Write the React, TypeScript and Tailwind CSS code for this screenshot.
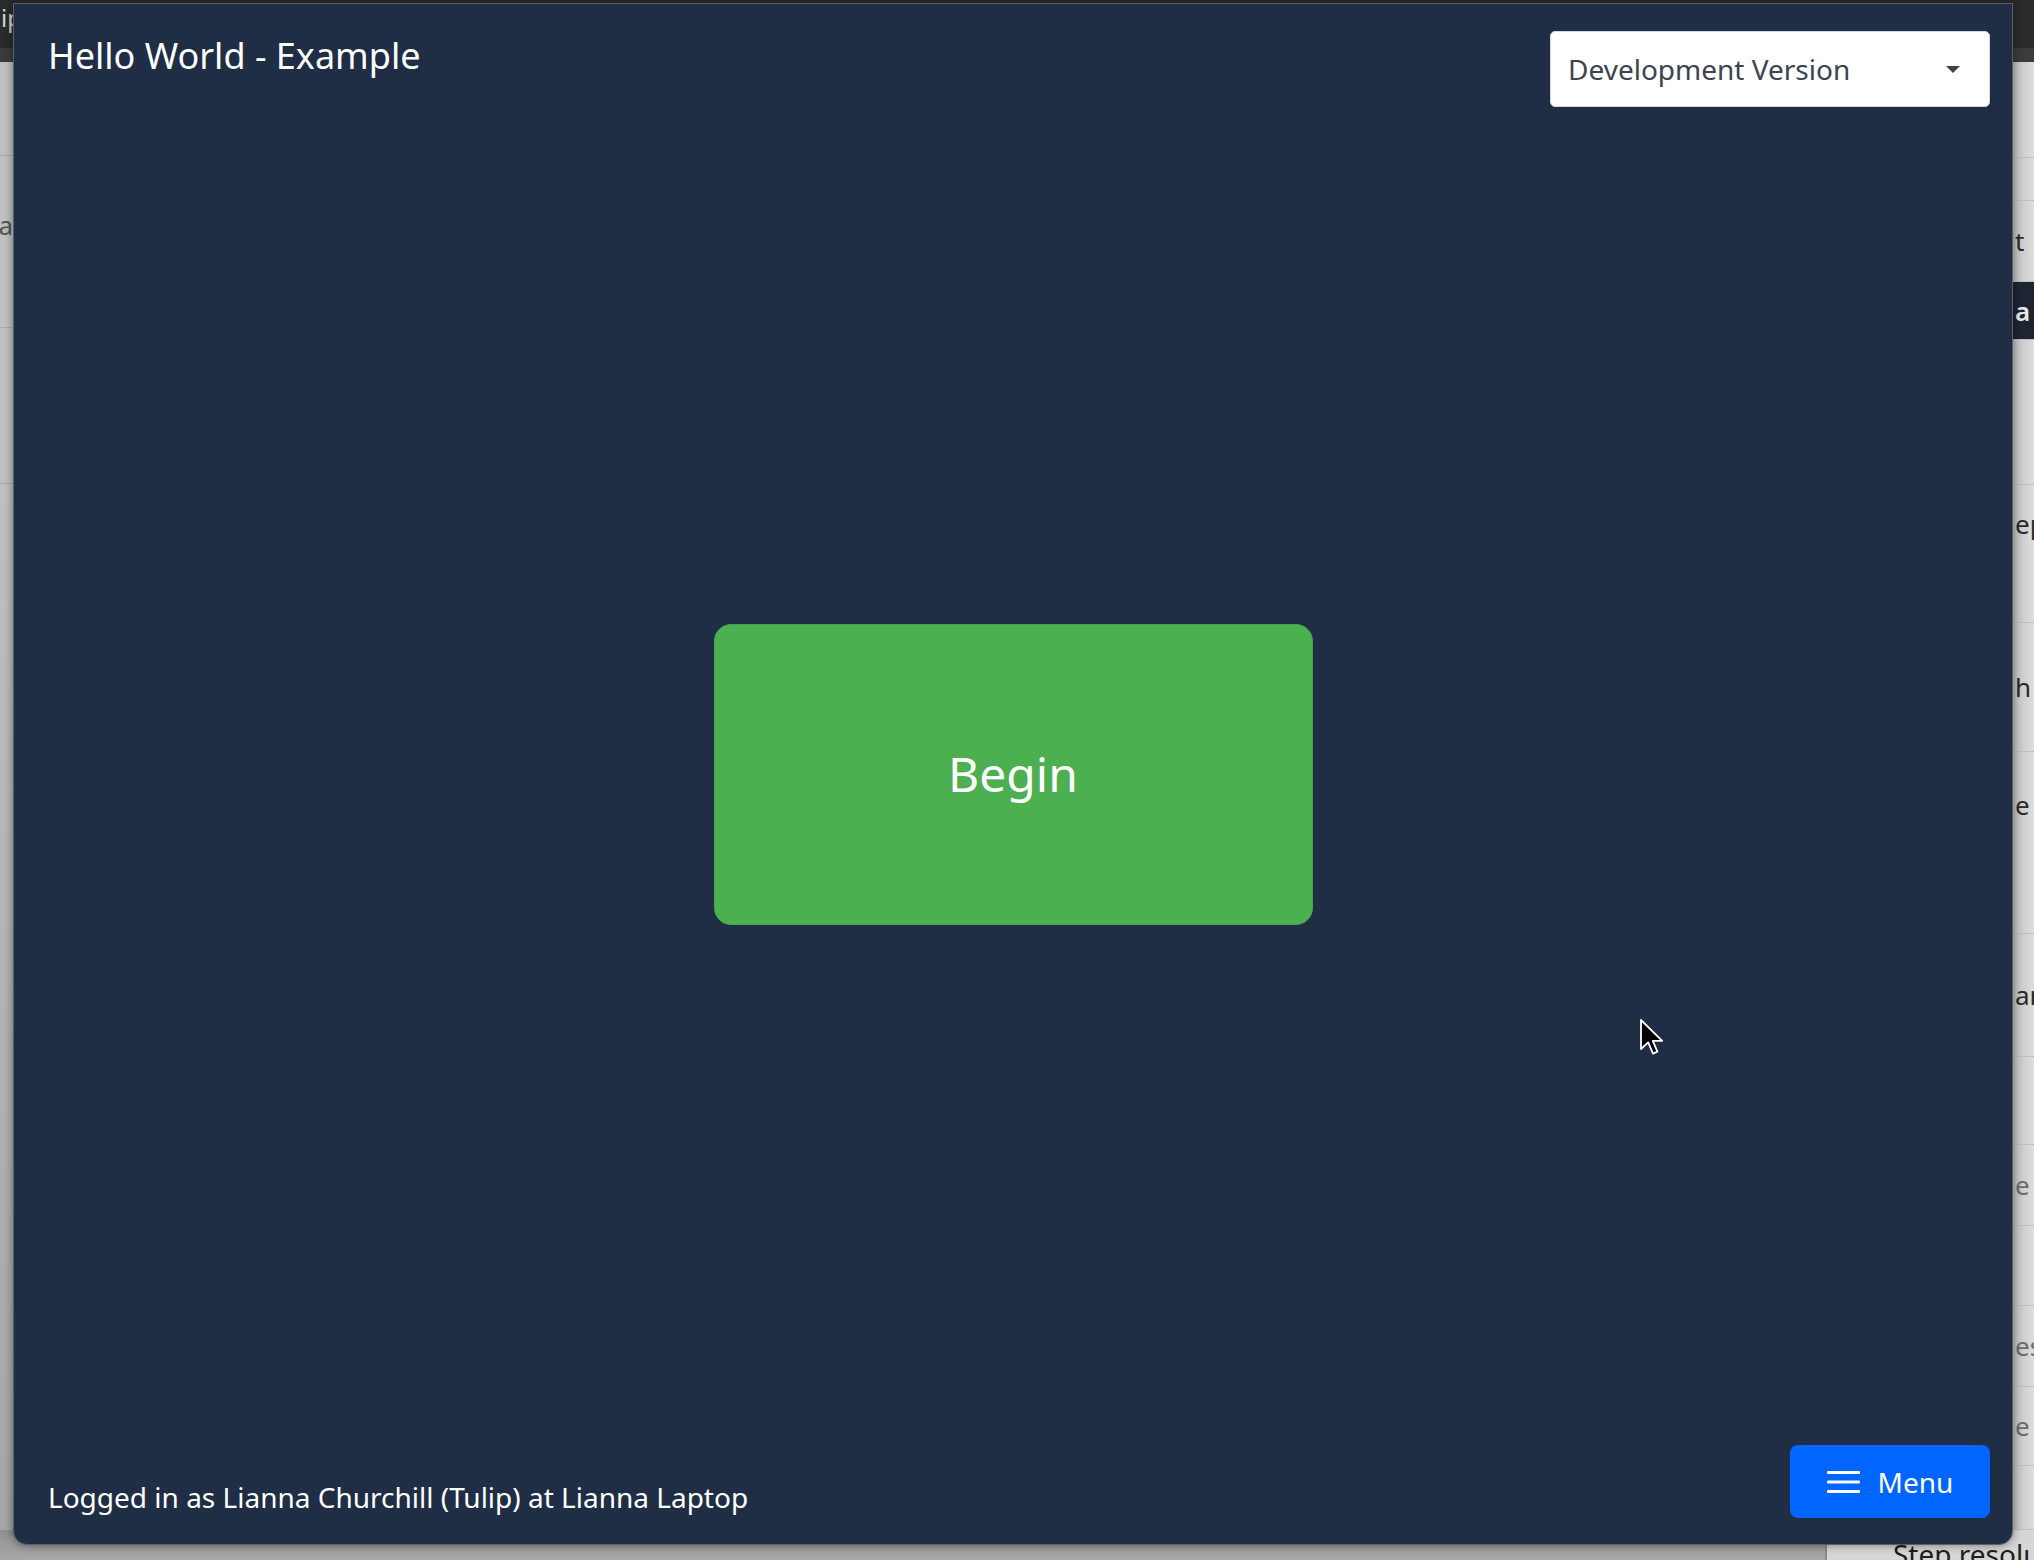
import React from 'react';

const rightRows = [
  { h: 'h-[96px]', text: '', cls: '' },
  { h: 'h-[43px]', text: '', cls: '' },
  { h: 'h-[81px]', text: 't', cls: 'items-center text-[#2a2a2a]' },
  { h: 'h-[58px]', text: 'a', cls: 'items-center bg-[#1f2433] text-[#e5e7eb] font-semibold' },
  { h: 'h-[145px]', text: '', cls: '' },
  { h: 'h-[138px]', text: 'ep', cls: 'items-start pt-[22px] text-[#2a2a2a]' },
  { h: 'h-[129px]', text: 'h', cls: 'items-center text-[#2a2a2a]' },
  { h: 'h-[182px]', text: 'e', cls: 'items-start pt-[36px] text-[#2a2a2a]' },
  { h: 'h-[123px]', text: 'an', cls: 'items-center text-[#2a2a2a]' },
  { h: 'h-[88px]', text: '', cls: '' },
  { h: 'h-[81px]', text: 'e', cls: 'items-center text-[#6b6b6b]' },
  { h: 'h-[80px]', text: '', cls: '' },
  { h: 'h-[81px]', text: 'es', cls: 'items-center text-[#6b6b6b]' },
  { h: 'h-[79px]', text: 'e', cls: 'items-center text-[#6b6b6b]' },
  { h: 'h-[64px]', text: '', cls: '' },
];

function BackgroundPage() {
  return (
    <div className="flex h-full w-full flex-col bg-[#cfcfcf]">
      <div className="h-[48px] shrink-0 bg-[#2b2b2b] pl-[1px] pt-[2px] text-[24px] leading-[32px] text-[#d4d4d4]">
        ip
      </div>
      <div className="h-[14px] shrink-0 bg-[#3b3b3b]" />

      <div className="flex min-h-0 flex-1">
        <div className="flex w-[13px] shrink-0 flex-col bg-[#c0c0c0]">
          <div className="h-[94px] border-b border-[#a9a9a9]" />
          <div className="flex h-[172px] items-start justify-end overflow-hidden border-b border-[#a9a9a9] pt-[52px] text-[26px] leading-[34px] text-[#555]">
            va
          </div>
          <div className="h-[156px] border-b border-[#a9a9a9]" />
          <div className="flex-1 bg-gradient-to-b from-[#c0c0c0] to-[#a6a6a6]" />
        </div>

        <div className="flex-1" />

        <div className="flex w-[26px] shrink-0 flex-col overflow-hidden bg-gradient-to-r from-[#b9b9b9] to-[#dedede]">
          {rightRows.map((row, i) => (
            <div
              key={i}
              className={`flex shrink-0 overflow-hidden whitespace-nowrap border-b border-[#bdbdbd] pl-[7px] text-[26px] leading-[34px] ${row.h} ${row.cls}`}
            >
              {row.text}
            </div>
          ))}
        </div>
      </div>

      <div className="flex h-[30px] shrink-0">
        <div className="flex-1 bg-gradient-to-b from-[#8f8f8f] to-[#a8a8a8]" />
        <div className="w-[209px] overflow-hidden whitespace-nowrap border-l-2 border-[#8a8a8a] bg-[#d6d6d6] pl-[66px] pt-[5px] text-[28px] leading-[38px] text-[#1e1e1e]">
          Step resolution
        </div>
      </div>
    </div>
  );
}

function Hamburger() {
  return (
    <svg width="33" height="22" viewBox="0 0 33 22" fill="#ffffff">
      <rect x="0" y="0" width="33" height="3" rx="1" />
      <rect x="0" y="9.5" width="33" height="3" rx="1" />
      <rect x="0" y="19" width="33" height="3" rx="1" />
    </svg>
  );
}

function Cursor() {
  return (
    <svg width="26" height="39" viewBox="0 0 13 19.5" className="block">
      <path
        d="M1 1 L1 15.5 L4.6 12.2 L7 17.8 L9.2 16.8 L6.9 11.4 L11.6 11.4 Z"
        fill="#000000"
        stroke="#ffffff"
        strokeWidth="0.9"
        strokeLinejoin="round"
      />
    </svg>
  );
}

export default function App() {
  return (
    <div className="relative h-[1560px] w-[2034px] overflow-hidden font-['Noto_Sans',sans-serif]">
      <BackgroundPage />

      <div className="absolute left-[13px] top-[3px] flex h-[1542px] w-[2000px] flex-col rounded-b-[14px] border border-[#5a616c] bg-[#1f2d45] shadow-[0_0_10px_rgba(0,0,0,0.45)]">
        <header className="flex h-[104px] shrink-0 items-start justify-between pl-[34px] pr-[22px] pt-[27px]">
          <h1 className="text-[36px] font-normal leading-[50px] text-white">Hello World - Example</h1>
          <button className="flex h-[76px] w-[440px] items-center justify-between rounded-[5px] border border-[#d5d8dd] bg-white pl-[17px] pr-[29px] text-[28px] leading-[38px] text-[#3d4350]">
            <span>Development Version</span>
            <svg width="14" height="7" viewBox="0 0 14 7">
              <path d="M0 0 L14 0 L7 7 Z" fill="#3d4350" />
            </svg>
          </button>
        </header>

        <main className="flex flex-1 items-center justify-center">
          <button className="flex h-[301px] w-[599px] items-center justify-center rounded-[17px] border border-[#45a349] bg-[#4caf50] text-[48px] leading-[64px] text-white">
            Begin
          </button>
        </main>

        <footer className="flex h-[104px] shrink-0 items-end justify-between pb-[26px] pl-[34px] pr-[22px]">
          <p className="mb-[2px] text-[28px] leading-[38px] text-white">
            Logged in as Lianna Churchill (Tulip) at Lianna Laptop
          </p>
          <button className="flex h-[73px] w-[200px] items-center justify-center gap-[18px] rounded-[8px] bg-[#0066ff] text-[28px] leading-[38px] text-white">
            <Hamburger />
            <span>Menu</span>
          </button>
        </footer>
      </div>

      <div className="absolute left-[1639px] top-[1018px]">
        <Cursor />
      </div>
    </div>
  );
}
